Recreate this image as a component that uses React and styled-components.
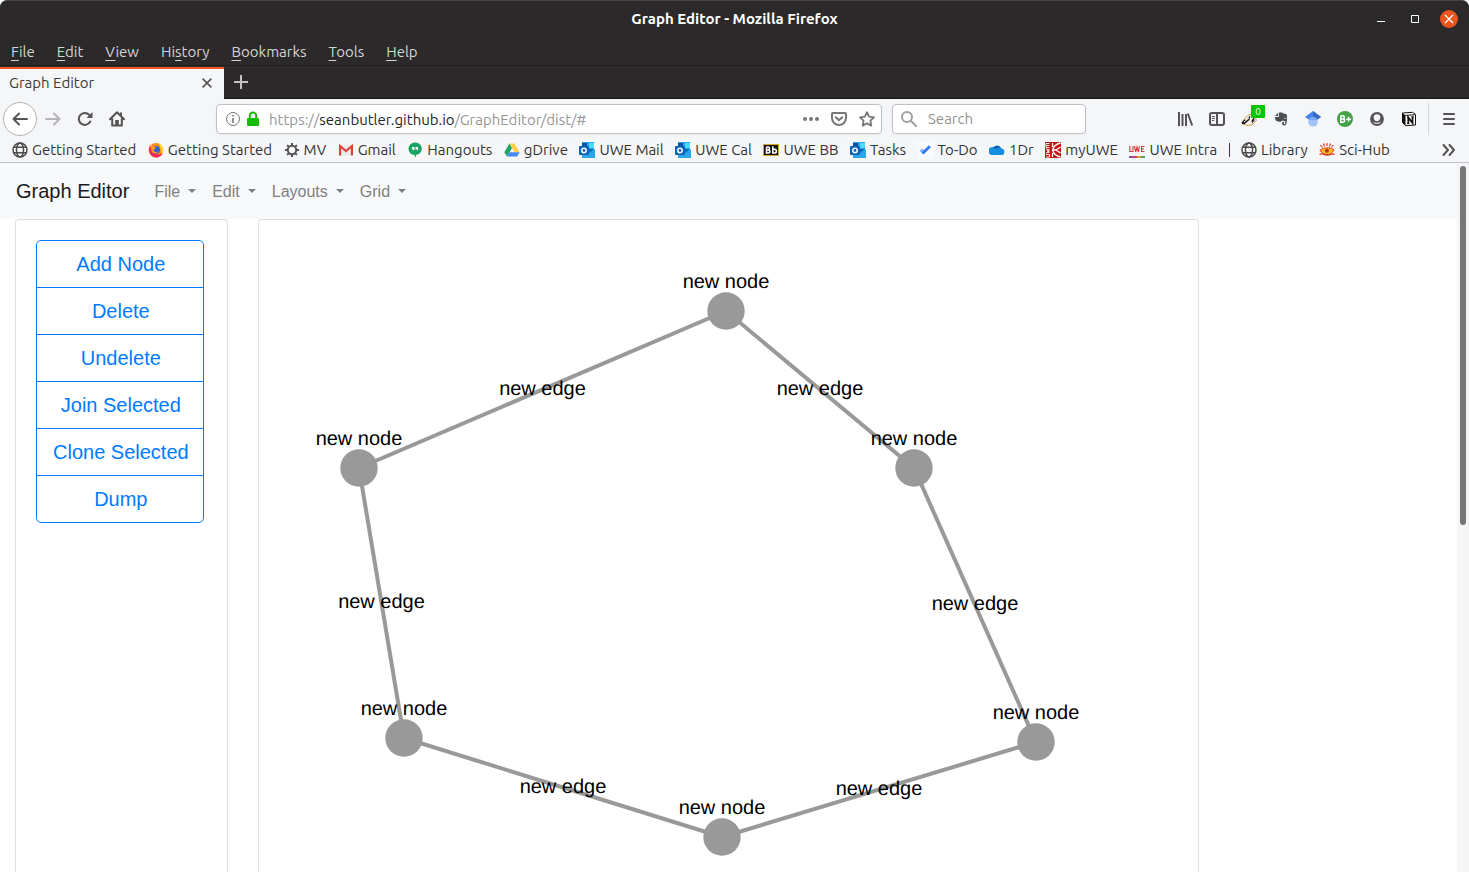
import React from "react";
import styled, { createGlobalStyle, css } from "styled-components";

const GlobalStyle = createGlobalStyle`
  *, *::before, *::after { box-sizing: border-box; }
  body { margin: 0; background: #fff; }
  button, input { font: inherit; margin: 0; }
`;

const ui = `"Ubuntu", "Noto Sans", sans-serif`;
const page = `"Liberation Sans", Arial, sans-serif`;

/* ---------- window frame ---------- */

const Window = styled.div`
  display: flex;
  flex-direction: column;
  height: 100vh;
  overflow: hidden;
  font-family: ${ui};
  font-size: 15px;
  color: #3b3b3d;
`;

const Frame = styled.header`
  background: #2c292a;
  border-top: 1px solid #454344;
  border-radius: 7px 7px 0 0;
  color: #d5d4d2;
`;

const TitleBar = styled.div`
  display: grid;
  grid-template-columns: 1fr auto 1fr;
  align-items: center;
  height: 37px;
  padding: 0 11px 2px;
`;

const Title = styled.h1`
  grid-column: 2;
  margin: 0;
  font-size: 15px;
  line-height: 18px;
  font-weight: 700;
  color: #fff;
`;

const WindowControls = styled.div`
  display: flex;
  justify-content: flex-end;
  align-items: center;
  gap: 16px;
`;

const ControlButton = styled.button`
  display: flex;
  align-items: center;
  justify-content: center;
  width: 18px;
  height: 18px;
  padding: 0;
  border: 0;
  border-radius: 50%;
  background: ${(p) => (p.$close ? "#e95420" : "transparent")};
`;

const MenuBar = styled.nav`
  display: flex;
  align-items: center;
  gap: 22px;
  height: 28px;
  padding-left: 11px;
  border-bottom: 1px solid #1f1d1e;
`;

const MenuButton = styled.button`
  padding: 0;
  border: 0;
  background: none;
  color: inherit;
  u { text-underline-offset: 3px; }
`;

const TabStrip = styled.div`
  display: flex;
  height: 33px;
  border-bottom: 1px solid #161314;
`;

const Tab = styled.div`
  display: flex;
  align-items: center;
  justify-content: space-between;
  width: 224px;
  height: 32px;
  margin: 1px 1px 0 0;
  padding: 0 9px 2px;
  border-top: 2px solid #f2551f;
  background: #f5f6f7;
  color: #3b3b3d;
`;

const TabLabel = styled.span`
  padding-bottom: 2px;
`;

const IconButton = styled.button`
  display: flex;
  align-items: center;
  justify-content: center;
  flex: none;
  width: ${(p) => p.$size || 32}px;
  height: ${(p) => p.$size || 32}px;
  padding: 0;
  border: 0;
  background: none;
  color: ${(p) => p.$color || "#545456"};
  position: relative;
  ${(p) =>
    p.$round &&
    css`
      border: 1px solid #b3b3b3;
      border-radius: 50%;
      background: #fff;
    `}
`;

/* ---------- toolbars ---------- */

const Toolbar = styled.div`
  display: flex;
  align-items: center;
  height: 40px;
  padding-left: 3px;
  background: #f5f6f7;
`;

const NavButtons = styled.div`
  display: flex;
  width: 213px;
  align-items: center;
`;

const Field = styled.div`
  display: flex;
  align-items: center;
  height: 30px;
  border: 1px solid #bfc1ca;
  border-radius: 4px;
  background: #fff;
  box-shadow: 0 1px 3px rgba(0, 0, 0, 0.05);
`;

const UrlField = styled(Field)`
  flex: 1;
  padding: 0 6px 0 8px;
`;

const SearchField = styled(Field)`
  width: 194px;
  margin-left: 10px;
  padding-left: 8px;
  gap: 11px;
`;

const FieldIcons = styled.div`
  display: flex;
  align-items: center;
  gap: ${(p) => p.$gap}px;
`;

const Address = styled.div`
  flex: 1;
  margin-left: 8px;
  color: #96969a;
  white-space: nowrap;
  strong { font-weight: 400; color: #252528; }
`;

const SearchInput = styled.input`
  flex: 1;
  min-width: 0;
  padding: 0 0 2px;
  border: 0;
  outline: 0;
  background: transparent;
  color: #333;
  &::placeholder { color: #939397; opacity: 1; }
`;

const Extensions = styled.div`
  display: flex;
  margin-left: 83px;
`;

const CountBadge = styled.span`
  position: absolute;
  top: 2px;
  left: 18px;
  width: 14px;
  height: 13px;
  border-radius: 1px;
  background: #00c400;
  color: #fff;
  font-size: 10px;
  line-height: 13px;
  text-align: center;
`;

const MenuSlot = styled.div`
  display: flex;
  justify-content: center;
  width: 41px;
  margin-left: 3px;
  border-left: 1px solid #d5d6da;
`;

const Bookmarks = styled.nav`
  display: flex;
  align-items: center;
  gap: 51px;
  height: 24px;
  padding: 0 12px 2px;
  border-bottom: 1px solid #c0c2ce;
  background: #f5f6f7;
`;

const BookmarkList = styled.div`
  display: flex;
  flex: 1;
  align-items: center;
  justify-content: space-between;
`;

const Bookmark = styled.a`
  display: flex;
  align-items: center;
  gap: 4px;
  color: #333335;
  text-decoration: none;
  white-space: nowrap;
  svg { flex: none; }
`;

const Separator = styled.span`
  width: 1px;
  height: 14px;
  background: #3b3b3d;
`;

const Overflow = styled.button`
  display: flex;
  padding: 0;
  border: 0;
  background: none;
  color: #545456;
`;

/* ---------- web page ---------- */

const Viewport = styled.div`
  display: flex;
  flex: 1;
  min-height: 0;
  font-family: ${page};
  background: #fff;
`;

const Page = styled.main`
  display: flex;
  flex-direction: column;
  flex: 1;
  min-width: 0;
  overflow: hidden;
`;

const ScrollTrack = styled.div`
  width: 12px;
  padding: 3px;
  background: #f5f5f5;
`;

const ScrollThumb = styled.div`
  height: 51%;
  border-radius: 3px;
  background: #777;
`;

const Navbar = styled.nav`
  display: flex;
  flex: none;
  align-items: center;
  height: 56px;
  padding: 0 16px;
  background: #f8f9fb;
`;

const Brand = styled.a`
  margin-right: 17px;
  font-size: 20px;
  color: #1a1a1b;
  text-decoration: none;
`;

const Dropdown = styled.button`
  display: flex;
  align-items: center;
  padding: 9px 8px 7px;
  border: 0;
  background: none;
  font-size: 16px;
  line-height: 24px;
  color: #7f8081;
  &::after {
    content: "";
    margin: 0 0 3px 8px;
    border: 4px solid transparent;
    border-top-color: currentColor;
    border-bottom: 0;
  }
`;

const Row = styled.div`
  display: flex;
  flex: 1;
  min-height: 0;
`;

const Column = styled.div`
  flex: none;
  display: flex;
  width: calc(100% * ${(p) => p.$span} / 12);
  padding: 0 15px;
`;

const Card = styled.section`
  flex: 1;
  min-width: 0;
  border: 1px solid #dfdfdf;
  border-bottom: 0;
  border-radius: 4px 4px 0 0;
  padding: ${(p) => p.$pad || 0}px;
  overflow: hidden;
`;

const ButtonGroup = styled.div`
  display: inline-flex;
  flex-direction: column;
`;

const ActionButton = styled.button`
  padding: 8px 14px 8px 16px;
  border: 1px solid #007bff;
  background: transparent;
  color: #007bff;
  font-size: 20px;
  line-height: 30px;
  white-space: nowrap;
  & + & { margin-top: -1px; }
  &:first-child { border-radius: 5px 5px 0 0; }
  &:last-child { border-radius: 0 0 5px 5px; }
`;

const Canvas = styled.svg`
  display: block;
  width: 100%;
  height: 100%;
  overflow: visible;
  text { font: 20px ${page}; text-anchor: middle; fill: #000; text-rendering: geometricPrecision; }
  line { stroke: #999; stroke-width: 4; }
  circle { fill: #999; }
`;

/* ---------- icons ---------- */

const Svg = ({ size = 16, children, ...rest }) => (
  <svg width={size} height={size} viewBox="0 0 16 16" fill="none" aria-hidden="true" {...rest}>
    {children}
  </svg>
);

const stroke = { stroke: "currentColor", strokeWidth: 2, strokeLinecap: "round", strokeLinejoin: "round" };

const BackIcon = () => <Svg><path {...stroke} d="M15 8H1.500M7 2.500L1.500 8L7 13.500" /></Svg>;
const ForwardIcon = () => <Svg><path {...stroke} d="M1 8H14.500M9 2.500L14.500 8L9 13.500" /></Svg>;
const ReloadIcon = () => (
  <Svg>
    <path {...stroke} d="M13.200 10.500A6 6 0 1 1 12.200 3.800" />
    <path fill="currentColor" d="M15.500 1V7H9.500Z" />
  </Svg>
);
const HomeIcon = () => (
  <Svg>
    <path {...stroke} d="M1 8.200L8 1.200L15 8.200M3.200 8V14.500H12.800V8" />
    <path fill="currentColor" d="M6.200 14.500V9H9.800V14.500ZM11 1.500h2v3h-2z" />
  </Svg>
);
const InfoIcon = () => (
  <Svg>
    <circle cx="8" cy="8" r="6.500" stroke="#77777a" />
    <path stroke="#77777a" strokeWidth="1.600" d="M8 7V12M8 4V5.600" />
  </Svg>
);
const LockIcon = () => (
  <Svg>
    <path stroke="#12bc00" strokeWidth="2" d="M4.800 8V4.800a3.200 3.200 0 0 1 6.400 0V8" />
    <rect x="2" y="7" width="12" height="8" rx="1" fill="#12bc00" />
  </Svg>
);
const DotsIcon = () => (
  <Svg fill="#77777a"><circle cx="2" cy="8" r="2" /><circle cx="8" cy="8" r="2" /><circle cx="14" cy="8" r="2" /></Svg>
);
const PocketIcon = () => (
  <Svg stroke="#77777a" strokeWidth="2" strokeLinecap="round" strokeLinejoin="round">
    <path d="M2 2H14a1 1 0 0 1 1 1V7A7 7 0 0 1 1 7V3a1 1 0 0 1 1-1Z" />
    <path d="M4.800 6.200L8 9.200L11.200 6.200" />
  </Svg>
);
const StarIcon = () => (
  <Svg stroke="#77777a" strokeWidth="1.800" strokeLinejoin="round">
    <path d="M8 1.200L10.100 5.700L15 6.300L11.400 9.700L12.300 14.600L8 12.200L3.700 14.600L4.600 9.700L1 6.300L5.900 5.700Z" />
  </Svg>
);
const SearchIcon = () => (
  <Svg stroke="#a0a0a3" strokeWidth="2">
    <circle cx="6" cy="6" r="5" />
    <path strokeLinecap="round" d="M9.800 9.800L15 15" />
  </Svg>
);
const LibraryIcon = () => (
  <Svg stroke="currentColor" strokeWidth="2"><path d="M2 1V15M5.500 3V15M9 3V15M10.800 2.500L15.200 14.500" /></Svg>
);
const SidebarIcon = () => (
  <Svg>
    <rect x="1" y="2" width="14" height="12" rx="2" {...stroke} />
    <path stroke="currentColor" strokeWidth="2" d="M8 2V14" />
    <path stroke="currentColor" d="M3 5.500H6M3 7.500H6M3 9.500H5" />
  </Svg>
);
const BadgerIcon = () => (
  <Svg>
    <path fill="#fbf8f2" stroke="#d08a3a" strokeWidth=".9" d="M1 12L3.500 7.500L9 3L14 5L15.300 9.500L11.500 13.500L6 14.500Z" />
    <path fill="#222" d="M.5 11.500L3.500 8.500L5.500 9L9.500 4L8.500 9L3.500 13.200H1.200ZM10.500 9.500L13 6L13.500 9.500L11 12.500Z" />
    <path stroke="#fff" strokeWidth=".9" d="M3 11L8 7" />
  </Svg>
);
const EvernoteIcon = () => (
  <Svg fill="#4a5053">
    <path d="M2 5L5.200 1.800V5ZM6 1.500H8.500C9.500 1.500 10 2.200 10.500 2.500L13 3C14 3.300 14 5 14 7C14 11 13.500 14.500 11.500 14.500C9.500 14.500 9 13.500 9 12.500C9 11.200 10 10.700 11.200 10.900L11 12.200C10 12.200 10.200 13.200 11.300 13.200C12.500 13.200 12.500 11.500 12.200 10.300C11 9.800 9.500 10 9 9.200C8.500 10.800 7.500 11 5 10.600C2.500 10.200 2 8 2 6H5C5.800 6 6 5.500 6 5Z" />
    <path stroke="#fff" strokeWidth=".8" d="M11.200 7.500C12 6.800 12.500 7 13 7.700" />
  </Svg>
);
const ScholarIcon = () => (
  <Svg>
    <path fill="#4284f3" d="M8 0L16 6L11 9.500H5L0 6Z" />
    <path fill="#356ac3" d="M8 0L16 6L11 9.500L8 6Z" />
    <circle cx="8" cy="10.800" r="4.800" fill="#a0c2fa" />
    <path fill="#76a7fa" d="M3.700 9A4.800 4.800 0 0 1 12.300 9Z" />
  </Svg>
);
const BPlusIcon = () => (
  <Svg>
    <circle cx="8" cy="8" r="8" fill="#43a146" />
    <path stroke="#fff" strokeWidth="1.600" d="M3.800 4.800V11.200H6C8.200 11.200 8.200 8 6 8H3.800M3.800 4.800H6C7.700 4.800 7.700 8 6 8M9.200 8.200H14M11.600 5.800V10.600" />
  </Svg>
);
const AccountIcon = () => (
  <Svg>
    <circle cx="8" cy="8" r="6.900" fill="currentColor" />
    <path fill="#f5f6f7" d="M8 3.200A3.300 3.300 0 0 1 11.300 6.500C11.300 8.800 9.800 10.200 8 10.200S4.700 8.800 4.700 6.500A3.300 3.300 0 0 1 8 3.200Z" />
    <path stroke="#f5f6f7" d="M4.500 11.300C5.500 12.700 10.500 12.700 11.500 11.300" />
  </Svg>
);
const NotionIcon = () => (
  <Svg>
    <path fill="#fff" stroke="#111" strokeLinejoin="round" d="M1.500 2L11.500 1.300L14.500 3.500V14L4.500 14.700L1.500 11.500Z" />
    <path fill="#111" d="M1.500 2L4.500 4.500V14.700L1.500 11.500Z" />
    <path stroke="#111" d="M4.300 4.400L14.500 3.700" />
    <path stroke="#111" strokeWidth="1.800" d="M7.300 12.500V6.500L11.500 12V5.800" />
    <path stroke="#111" d="M6 6.300H8M6 12.600H8.500M10.500 5.800H13" />
  </Svg>
);
const HamburgerIcon = () => <Svg {...stroke}><path d="M3 3H13M3 8H13M3 13H13" /></Svg>;
const CloseIcon = ({ size }) => <Svg size={size} stroke="currentColor" strokeWidth="1.800"><path d="M3 3L13 13M13 3L3 13" /></Svg>;
const PlusIcon = () => <Svg stroke="currentColor" strokeWidth="2"><path d="M8 1V15M1 8H15" /></Svg>;
const ChevronsIcon = () => <Svg {...stroke}><path d="M2.500 3L7 8L2.500 13M8.500 3L13 8L8.500 13" /></Svg>;

const GlobeIcon = () => (
  <Svg stroke="#4b4b4d" strokeWidth="1.500">
    <circle cx="8" cy="8" r="7" />
    <ellipse cx="8" cy="8" rx="3.500" ry="7" />
    <path d="M2 5.200H14M2 10.800H14" />
  </Svg>
);
const FirefoxIcon = () => (
  <Svg>
    <circle cx="8" cy="8.300" r="7.300" fill="#ff8a16" />
    <path fill="#ffd52e" d="M10 .5C15 3 16.500 8 14 12.500C13 9 13 5 10 .5Z" />
    <path fill="#f5265d" d="M1.500 4C0 9 2 14.500 8 15.500C12 15.500 14 13 14.500 11C11 14 5 12 4.500 7.500Z" />
    <circle cx="8" cy="7.800" r="3.900" fill="#2e5fdc" />
    <path fill="#ff9a1f" d="M2 2.500L5 4.500L8 5L7 7L5.500 8C6 10 8 10.500 10 9.500C9 12.500 4.500 12 3.500 9Z" />
  </Svg>
);
const GearIcon = () => (
  <Svg stroke="#545456">
    <circle cx="8" cy="8" r="4.200" strokeWidth="2" />
    <path strokeWidth="2" d="M8 1V4M8 12V15M1 8H4M12 8H15M3.100 3.100L5.100 5.100M10.900 10.900L12.900 12.900M3.100 12.900L5.100 10.900M10.900 5.100L12.900 3.100" />
  </Svg>
);
const GmailIcon = () => (
  <Svg>
    <path fill="#ececec" d="M2 3H14V13.500H2Z" />
    <path stroke="#d8463a" strokeWidth="2.200" d="M2.100 13.500V4L8 9L13.900 4V13.500" />
  </Svg>
);
const HangoutsIcon = () => (
  <Svg>
    <path fill="#17a462" d="M8 .5A6.200 6.200 0 0 1 9 13V15.800L7.500 13A6.200 6.200 0 0 1 8 .5Z" />
    <path fill="#fff" d="M5 5H7.500V7.500L6.500 9V7.500H5ZM8.600 5H11.100V7.500L10.100 9V7.500H8.600Z" />
  </Svg>
);
const DriveIcon = () => (
  <Svg>
    <path fill="#1fa463" d="M5.500 1.500L8 6L3 14.500L.3 10.200Z" />
    <path fill="#ffcf48" d="M5.500 1.500H10.500L15.700 10.200H10.500Z" />
    <path fill="#4688f4" d="M5.500 10.200H15.700L13.200 14.500H3Z" />
  </Svg>
);
const OutlookIcon = () => (
  <Svg>
    <path fill="#28a8ea" d="M3 0H15V7L16 8V16H3Z" />
    <path fill="#0f4f96" d="M3 1H8V6H3Z" />
    <path fill="#50d9ff" d="M10 1H15V6H10Z" />
    <path fill="#1268b8" d="M7 7H15L9 12Z" />
    <rect y="4" width="10" height="9" rx="1" fill="#0a64bd" />
    <circle cx="5" cy="8.500" r="2.200" stroke="#fff" strokeWidth="1.500" />
  </Svg>
);
const BlackboardIcon = () => (
  <Svg>
    <rect x=".5" y="2.500" width="15" height="11" fill="#161616" stroke="#d5a826" />
    <path stroke="#fff" strokeWidth="1.500" d="M3.500 5V11H5C7.500 11 7.500 8 5 8M3.500 5H5C7 5 7 8 5 8H3.500M9.800 4.200V11H11.500C14 11 14 7.300 11.500 7.300H9.800" />
  </Svg>
);
const TodoIcon = () => (
  <Svg>
    <path fill="#fafbff" d="M0 0H16V16H0Z" />
    <path fill="#83b3ff" d="M2.500 8.800L5 6.500L8 9.300L5.800 11.800Z" />
    <path fill="#3478ee" d="M5.800 12L4.500 10.600L11.800 3.200L14 5.300L7 12Z" />
  </Svg>
);
const OneDriveIcon = () => (
  <Svg>
    <path fill="#0d5cb3" d="M3 7A5 5 0 0 1 12 6L13 10H3Z" />
    <path fill="#168bdf" d="M6 8A4.500 4.500 0 0 1 13 6.500A3.500 3.500 0 0 1 13.500 13H4A4 4 0 0 1 6 6Z" />
    <path fill="#1490df" d="M0 10A3.200 3.200 0 0 1 6 7L14 12C13 13 13 13 12 13H3A3 3 0 0 1 0 10Z" />
  </Svg>
);
const MyUweIcon = () => (
  <Svg>
    <path fill="#bd1712" d="M0 0H16V16H0Z" />
    <path stroke="#fff" strokeWidth=".9" d="M1 1.500L4.500 1.500M1 3.500H4.500M1 5.500H4.500M1 1V5.500M1 7L4.500 8L2 9L4.500 10L1 11M1 12.500H4.500V15H1" />
    <path stroke="#fff" strokeWidth="1.300" d="M15.500 1C11 2 8.500 4 7.500 8C8.500 12 11 14 15.500 15M7.500 1V5M7.500 11V15M15.500 5L11 8L15.500 11M11 8H7.500" />
  </Svg>
);
const UweIcon = () => (
  <Svg>
    <path stroke="#d9373a" strokeWidth="1.100" d="M.8 4V9.500H4V4M5.500 4L6.700 10L8 5L9.300 10L10.500 4M15.500 4.500H12.500V9.500H15.500M12.500 7H15" />
    <path fill="#7557a8" d="M0 14H4V16H0Z" /><path fill="#ce3d66" d="M4 14H8V16H4Z" />
    <path fill="#e49b32" d="M8 14H12V16H8Z" /><path fill="#4ba36b" d="M12 14H16V16H12Z" />
  </Svg>
);
const SciHubIcon = () => (
  <Svg>
    <path stroke="#dd3c22" strokeWidth="1.200" d="M1.500 3L3.500 5.500M4.500 1.500L5.500 4.500M8 1V4M11.500 1.500L10.500 4.500M14.500 3L12.500 5.500" />
    <path fill="#f9bd1e" stroke="#dd3c22" d="M.8 8.500C5 5 11 5 15.200 8C12 11 13 12.500 8 12.500C4 12.500 4 11 .8 8.500Z" />
    <circle cx="8" cy="8.800" r="2" fill="#c92a1b" />
    <path stroke="#dd3c22" strokeWidth="1.300" d="M.5 12.500C3 10.500 4 13 8 13S12.500 11 15.500 12.500" />
  </Svg>
);

/* ---------- data ---------- */

const MENUS = [["", "F", "ile"], ["", "E", "dit"], ["", "V", "iew"], ["Hi", "s", "tory"], ["", "B", "ookmarks"], ["", "T", "ools"], ["", "H", "elp"]];

const BOOKMARKS = [
  [GlobeIcon, "Getting Started"], [FirefoxIcon, "Getting Started"], [GearIcon, "MV"], [GmailIcon, "Gmail"],
  [HangoutsIcon, "Hangouts"], [DriveIcon, "gDrive"], [OutlookIcon, "UWE Mail"], [OutlookIcon, "UWE Cal"],
  [BlackboardIcon, "UWE BB"], [OutlookIcon, "Tasks"], [TodoIcon, "To-Do"], [OneDriveIcon, "1Dr"],
  [MyUweIcon, "myUWE"], [UweIcon, "UWE Intra"], null, [GlobeIcon, "Library"], [SciHubIcon, "Sci-Hub"],
];

const EXTENSIONS = [
  ["Library", LibraryIcon], ["Sidebars", SidebarIcon], ["Privacy Badger", BadgerIcon, "0"], ["Evernote", EvernoteIcon],
  ["Scholar", ScholarIcon], ["B+", BPlusIcon], ["Account", AccountIcon], ["Notion", NotionIcon],
];

const ACTIONS = ["Add Node", "Delete", "Undelete", "Join Selected", "Clone Selected", "Dump"];

const NODES = [[467, 91], [655, 248], [777, 522], [463, 617], [145, 518], [100, 248]];

function Graph() {
  const edges = NODES.map((a, i) => [a, NODES[(i + 1) % NODES.length]]);
  return (
    <Canvas role="img" aria-label="Graph">
      {edges.map(([a, b], i) => (
        <line key={i} x1={a[0]} y1={a[1]} x2={b[0]} y2={b[1]} />
      ))}
      {NODES.map(([x, y], i) => <circle key={i} cx={x} cy={y} r="18.700" />)}
      {edges.map(([a, b], i) => (
        <text key={i} x={(a[0] + b[0]) / 2} y={(a[1] + b[1]) / 2 + 5}>new edge</text>
      ))}
      {NODES.map(([x, y], i) => <text key={i} x={x} y={y - 23}>new node</text>)}
    </Canvas>
  );
}

export default function App() {
  return (
    <Window>
      <GlobalStyle />
      <Frame>
        <TitleBar>
          <Title>Graph Editor - Mozilla Firefox</Title>
          <WindowControls>
            <ControlButton aria-label="Minimize"><Svg stroke="#fff"><path d="M4 10.500H12" /></Svg></ControlButton>
            <ControlButton aria-label="Maximize"><Svg stroke="#fff"><path d="M4.500 4.500H11.500V11.500H4.500Z" /></Svg></ControlButton>
            <ControlButton $close aria-label="Close"><Svg stroke="#fff" strokeWidth="1.300"><path d="M4 4L12 12M12 4L4 12" /></Svg></ControlButton>
          </WindowControls>
        </TitleBar>
        <MenuBar>
          {MENUS.map(([a, k, b]) => <MenuButton key={a + k + b}>{a}<u>{k}</u>{b}</MenuButton>)}
        </MenuBar>
        <TabStrip>
          <Tab>
            <TabLabel>Graph Editor</TabLabel>
            <IconButton $size={16} aria-label="Close tab"><CloseIcon size={14} /></IconButton>
          </Tab>
          <IconButton $color="#c4c3c2" aria-label="New tab"><PlusIcon /></IconButton>
        </TabStrip>
      </Frame>

      <Toolbar>
        <NavButtons>
          <IconButton $round $size={34} aria-label="Back"><BackIcon /></IconButton>
          <IconButton $color="#b4b4b6" aria-label="Forward"><ForwardIcon /></IconButton>
          <IconButton aria-label="Reload"><ReloadIcon /></IconButton>
          <IconButton aria-label="Home"><HomeIcon /></IconButton>
        </NavButtons>
        <UrlField>
          <FieldIcons $gap={4}><InfoIcon /><LockIcon /></FieldIcons>
          <Address>https://<strong>seanbutler.github.io</strong>/GraphEditor/dist/#</Address>
          <FieldIcons $gap={12}><DotsIcon /><PocketIcon /><StarIcon /></FieldIcons>
        </UrlField>
        <SearchField>
          <SearchIcon />
          <SearchInput type="text" placeholder="Search" aria-label="Search" />
        </SearchField>
        <Extensions>
          {EXTENSIONS.map(([name, Icon, count]) => (
            <IconButton key={name} aria-label={name}>
              <Icon />
              {count && <CountBadge>{count}</CountBadge>}
            </IconButton>
          ))}
        </Extensions>
        <MenuSlot><IconButton aria-label="Open menu"><HamburgerIcon /></IconButton></MenuSlot>
      </Toolbar>

      <Bookmarks>
        <BookmarkList>
          {BOOKMARKS.map((item, i) => {
            if (!item) return <Separator key={i} />;
            const [Icon, label] = item;
            return <Bookmark key={i} href="#"><Icon />{label}</Bookmark>;
          })}
        </BookmarkList>
        <Overflow aria-label="More bookmarks"><ChevronsIcon /></Overflow>
      </Bookmarks>

      <Viewport>
        <Page>
          <Navbar>
            <Brand href="#">Graph Editor</Brand>
            {["File", "Edit", "Layouts", "Grid"].map((m) => <Dropdown key={m}>{m}</Dropdown>)}
          </Navbar>
          <Row>
            <Column $span={2}>
              <Card $pad={20}>
                <ButtonGroup>
                  {ACTIONS.map((a) => <ActionButton key={a}>{a}</ActionButton>)}
                </ButtonGroup>
              </Card>
            </Column>
            <Column $span={8}>
              <Card><Graph /></Card>
            </Column>
          </Row>
        </Page>
        <ScrollTrack><ScrollThumb /></ScrollTrack>
      </Viewport>
    </Window>
  );
}
